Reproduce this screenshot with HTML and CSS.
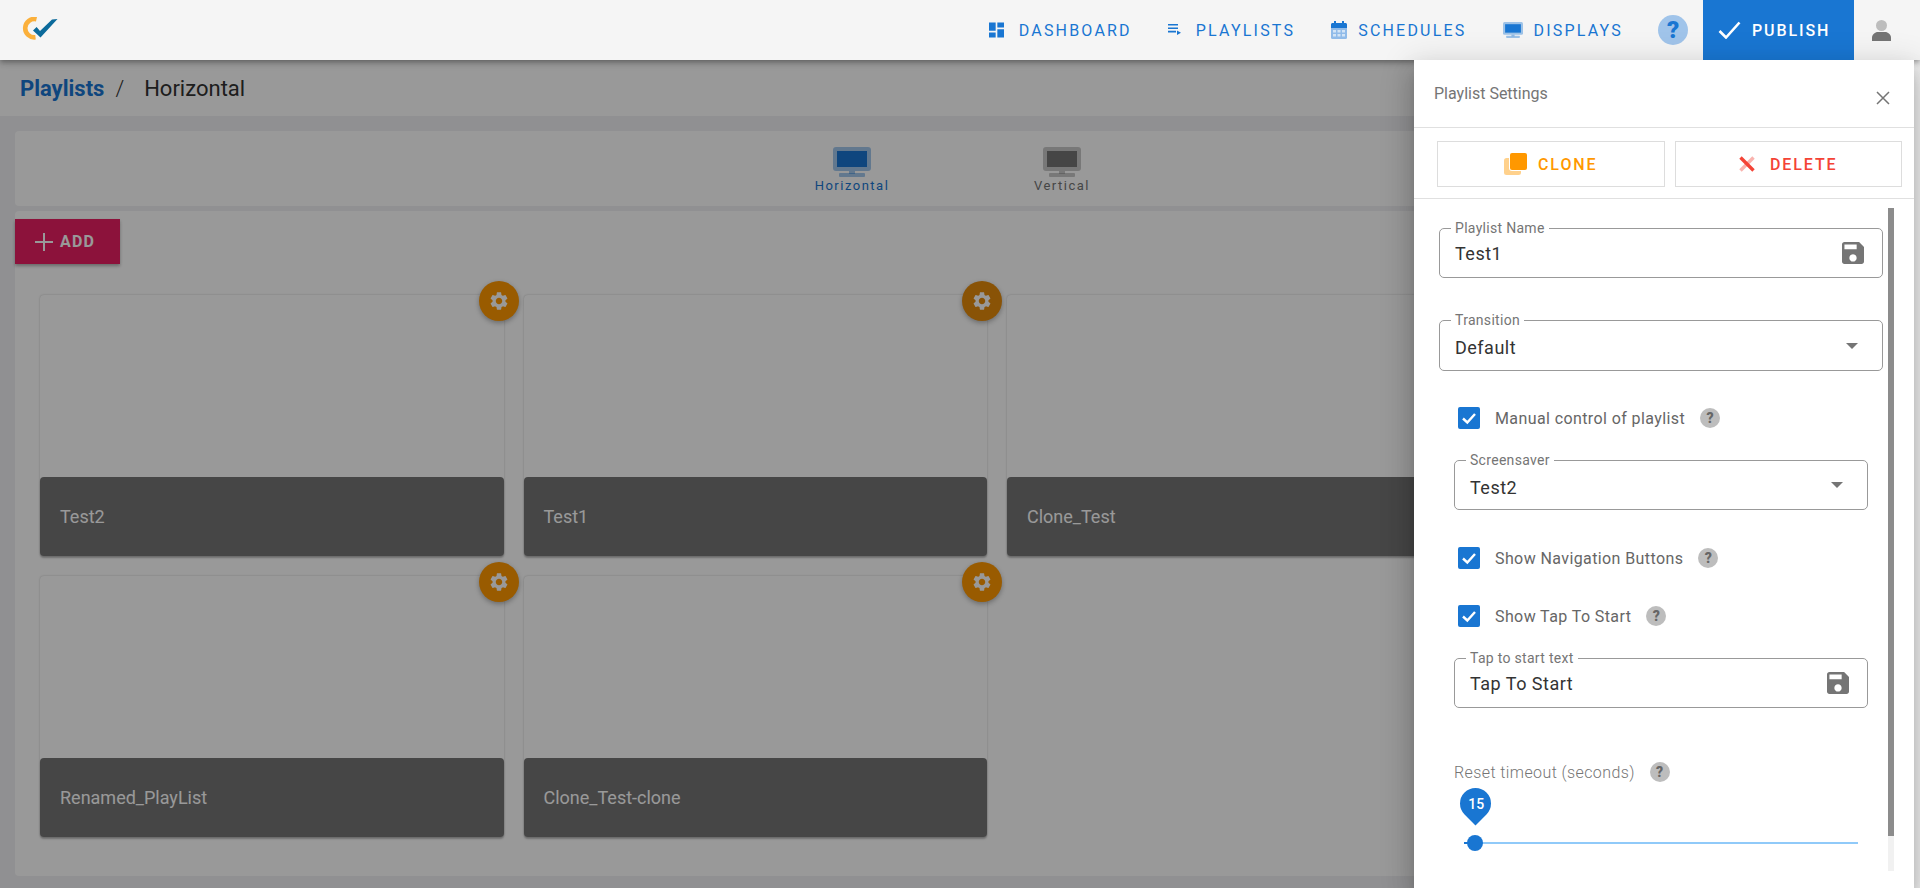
FILE: index.html
```html
<!DOCTYPE html>
<html lang="en">
<head>
    <meta charset="UTF-8">
    <meta name="viewport" content="width=device-width, initial-scale=1.0">
    <title>Playlists</title>
    <link rel="stylesheet" href="styles.css">
</head>
<body>
    <header class="topbar">
        <svg class="logo" viewBox="21 17 37 23">
            <path d="M36.5 19.2A9.2 9.2 0 1 0 35.5 37.3" fill="none" stroke="#fbb03b" stroke-width="4.6"/>
            <path d="M33 30.5L36.6 27L40 31L52 19.6L57.5 19L40.5 37.5Z" fill="#0b6a9b"/>
        </svg>
        <nav class="nav">
            <a class="nav-link gap-wide">
                <svg class="icon-dashboard" viewBox="3 3 18 18"><path d="M3 13h8V3H3v10zm0 8h8v-6H3v6zm10 0h8V11h-8v10zm0-18v6h8V3h-8z" fill="#1976d2"/></svg>
                DASHBOARD
            </a>
            <a class="nav-link gap-wide">
                <svg class="icon-playlist" viewBox="0 0 13 12"><path d="M0 0h10v1.6H0zM0 3.4h10V5H0zM0 6.8h8v1.6H0zM9 6.6l4 2.2-4 2.2z" fill="#1976d2"/></svg>
                PLAYLISTS
            </a>
            <a class="nav-link">
                <svg class="icon-calendar" viewBox="0 0 16 18">
                    <rect y="5" width="16" height="13" rx="1.5" fill="#90bbe9"/>
                    <path d="M0 7V3.5C0 2.7.7 2 1.500 2H3V0h2v2h6V0h2v2h1.500c.8 0 1.500.7 1.500 1.500V7z" fill="#1976d2"/>
                    <path d="M2 9h3v2.500H2zM6.500 9h3v2.500h-3zM11 9h3v2.500h-3zM2 13h3v2.500H2zM6.500 13h3v2.500h-3zM11 13h3v2.500h-3z" fill="#fff" opacity=".6"/>
                </svg>
                SCHEDULES
            </a>
            <a class="nav-link">
                <svg class="icon-monitor" viewBox="0 0 38 30">
                    <rect width="38" height="24" rx="3" fill="#1976d2" opacity=".4"/>
                    <rect x="16" y="24" width="6" height="3" fill="#1976d2" opacity=".4"/>
                    <rect x="6" y="26" width="26" height="4" rx="1" fill="#1976d2" opacity=".4"/>
                    <rect x="4" y="4" width="30" height="16" fill="#1976d2"/>
                </svg>
                DISPLAYS
            </a>
        </nav>
        <span class="nav-help">?</span>
        <button class="publish">
            <svg class="icon-check" viewBox="0 0 23 18"><path d="M1.500 10L8 16.500L21.500 1.500" fill="none" stroke="#fff" stroke-width="2.600"/></svg>
            PUBLISH
        </button>
        <svg class="icon-user" viewBox="0 0 19 21">
            <circle cx="9.500" cy="5.500" r="5.500" fill="#bdbdbd"/>
            <path d="M0 21v-3.500C0 14.500 3 12 6 12h7c3 0 6 2.500 6 5.500V21z" fill="#757575"/>
        </svg>
    </header>

    <main class="page">
        <div class="breadcrumb">
            <a class="crumb-link">Playlists</a>
            <span class="crumb-sep">/</span>
            <span class="crumb-current">Horizontal</span>
        </div>

        <section class="tabs">
            <div class="tab tab-active">
                <svg class="tab-icon" viewBox="0 0 38 30">
                    <rect width="38" height="24" rx="3" fill="#1976d2" opacity=".4"/>
                    <rect x="16" y="24" width="6" height="3" fill="#1976d2" opacity=".4"/>
                    <rect x="6" y="26" width="26" height="4" rx="1" fill="#1976d2" opacity=".4"/>
                    <rect x="4" y="4" width="30" height="16" fill="#1976d2"/>
                </svg>
                <span>Horizontal</span>
            </div>
            <div class="tab">
                <svg class="tab-icon" viewBox="0 0 38 30">
                    <rect width="38" height="24" rx="3" fill="#757575" opacity=".4"/>
                    <rect x="16" y="24" width="6" height="3" fill="#757575" opacity=".4"/>
                    <rect x="6" y="26" width="26" height="4" rx="1" fill="#757575" opacity=".4"/>
                    <rect x="4" y="4" width="30" height="16" fill="#757575"/>
                </svg>
                <span>Vertical</span>
            </div>
        </section>

        <section class="content">
            <button class="add-btn">
                <svg class="icon-plus" viewBox="0 0 18 18"><path d="M8 0h2v8h8v2h-8v8H8v-8H0V8h8z" fill="#fff"/></svg>
                ADD
            </button>
            <div class="card-grid">
                <div class="card">
                    <span class="gear"><svg viewBox="2 2 20 20"><use href="#gear-path"/></svg></span>
                    <div class="card-title">Test2</div>
                </div>
                <div class="card">
                    <span class="gear gear-dark"><svg viewBox="2 2 20 20"><use href="#gear-path"/></svg></span>
                    <div class="card-title">Test1</div>
                </div>
                <div class="card">
                    <span class="gear"><svg viewBox="2 2 20 20"><use href="#gear-path"/></svg></span>
                    <div class="card-title">Clone_Test</div>
                </div>
                <div class="card">
                    <span class="gear"><svg viewBox="2 2 20 20"><use href="#gear-path"/></svg></span>
                    <div class="card-title">Renamed_PlayList</div>
                </div>
                <div class="card">
                    <span class="gear"><svg viewBox="2 2 20 20"><use href="#gear-path"/></svg></span>
                    <div class="card-title">Clone_Test-clone</div>
                </div>
            </div>
        </section>
    </main>

    <div class="backdrop"></div>

    <aside class="settings">
        <div class="settings-head">
            <span>Playlist Settings</span>
            <svg class="icon-close" viewBox="0 0 14 14"><path d="M1 1l12 12M13 1L1 13" stroke="#757575" stroke-width="1.500"/></svg>
        </div>
        <div class="settings-actions">
            <button class="action action-clone">
                <svg class="icon-clone" viewBox="0 0 23 22">
                    <rect y="5" width="17" height="17" rx="2.500" fill="#ff9800" opacity=".45"/>
                    <rect x="5" y="-1" width="19" height="19" rx="3" fill="#fff"/>
                    <rect x="6" width="17" height="17" rx="2" fill="#ff9800"/>
                </svg>
                CLONE
            </button>
            <button class="action action-delete">
                <svg class="icon-x" viewBox="0 0 16 16">
                    <path d="M14.500 1.500L1.500 14.500" stroke="#f44336" stroke-width="3.400" opacity=".4"/>
                    <path d="M1.500 1.500L14.500 14.500" stroke="#f44336" stroke-width="3.400"/>
                </svg>
                DELETE
            </button>
        </div>
        <div class="settings-body">
            <div class="settings-form">
                <div class="field field-name">
                    <label class="field-label">Playlist Name</label>
                    <span class="field-value">Test1</span>
                    <svg class="icon-save" viewBox="3 3 18 18"><path d="M17 3H5c-1.110 0-2 .9-2 2v14c0 1.100.89 2 2 2h14c1.100 0 2-.9 2-2V7l-4-4zm-5 16c-1.660 0-3-1.340-3-3s1.340-3 3-3 3 1.340 3 3-1.340 3-3 3zm3-10H5V5h10v4z" fill="#757575"/></svg>
                </div>
                <div class="field field-select field-transition">
                    <label class="field-label">Transition</label>
                    <span class="field-value">Default</span>
                    <span class="caret"></span>
                </div>
                <div class="nested">
                    <div class="check-row row-manual">
                        <span class="checkbox"><svg viewBox="0 0 22 22"><path d="M5 11.500L9.300 15.500L17 7" fill="none" stroke="#fff" stroke-width="2.400"/></svg></span>
                        <span class="check-label">Manual control of playlist</span>
                        <span class="help">?</span>
                    </div>
                    <div class="field field-select field-screensaver">
                        <label class="field-label">Screensaver</label>
                        <span class="field-value">Test2</span>
                        <span class="caret"></span>
                    </div>
                    <div class="check-row row-nav">
                        <span class="checkbox"><svg viewBox="0 0 22 22"><path d="M5 11.500L9.300 15.500L17 7" fill="none" stroke="#fff" stroke-width="2.400"/></svg></span>
                        <span class="check-label">Show Navigation Buttons</span>
                        <span class="help">?</span>
                    </div>
                    <div class="check-row row-tap">
                        <span class="checkbox"><svg viewBox="0 0 22 22"><path d="M5 11.500L9.300 15.500L17 7" fill="none" stroke="#fff" stroke-width="2.400"/></svg></span>
                        <span class="check-label">Show Tap To Start</span>
                        <span class="help">?</span>
                    </div>
                    <div class="field field-tap">
                        <label class="field-label">Tap to start text</label>
                        <span class="field-value">Tap To Start</span>
                        <svg class="icon-save" viewBox="3 3 18 18"><path d="M17 3H5c-1.110 0-2 .9-2 2v14c0 1.100.89 2 2 2h14c1.100 0 2-.9 2-2V7l-4-4zm-5 16c-1.660 0-3-1.340-3-3s1.340-3 3-3 3 1.340 3 3-1.340 3-3 3zm3-10H5V5h10v4z" fill="#757575"/></svg>
                    </div>
                    <div class="slider-head">
                        <span>Reset timeout (seconds)</span>
                        <span class="help">?</span>
                    </div>
                    <div class="slider">
                        <span class="slider-pin"><b>15</b></span>
                        <span class="slider-thumb"></span>
                    </div>
                </div>
            </div>
            <div class="scrollbar"><div class="scrollbar-thumb"></div></div>
        </div>
    </aside>

    <svg class="defs" width="0" height="0">
        <path id="gear-path" fill="#fff" d="M19.140 12.940c.04-.3.06-.61.06-.94 0-.32-.02-.64-.07-.94l2.030-1.580c.18-.14.23-.41.12-.61l-1.920-3.320c-.12-.22-.37-.29-.59-.22l-2.390.96c-.5-.38-1.030-.7-1.620-.94l-.36-2.540c-.04-.24-.24-.41-.48-.41h-3.840c-.24 0-.43.17-.47.41l-.36 2.540c-.59.24-1.130.57-1.620.94l-2.390-.96c-.22-.08-.47 0-.59.22L2.740 8.870c-.12.21-.08.47.12.61l2.030 1.580c-.05.3-.09.63-.09.94s.02.64.07.94l-2.030 1.580c-.18.14-.23.41-.12.61l1.920 3.320c.12.22.37.29.59.22l2.390-.96c.5.38 1.030.7 1.620.94l.36 2.540c.05.24.24.41.48.41h3.840c.24 0 .44-.17.47-.41l.36-2.540c.59-.24 1.130-.56 1.620-.94l2.390.96c.22.08.47 0 .59-.22l1.920-3.320c.12-.22.07-.47-.12-.61l-2.010-1.580zM12 15.600c-1.980 0-3.600-1.620-3.600-3.600s1.620-3.600 3.600-3.600 3.600 1.620 3.600 3.600-1.620 3.600-3.600 3.600z"/>
    </svg>
</body>
</html>
```

FILE: styles.css
```css
*{
    box-sizing: border-box;
}
html, body{
    margin: 0;
    height: 100%;
    overflow: hidden;
}
body{
    background-color: #f1f1f1;
    font-family: Roboto, "Liberation Sans", sans-serif;
    color: #333;
}
.defs{
    position: absolute;
}

/* top bar */
.topbar{
    position: relative;
    z-index: 3;
    height: 60px;
    display: flex;
    align-items: center;
    background-color: #f5f5f5;
    box-shadow: 0 2px 4px -1px rgba(0,0,0,.2), 0 4px 5px rgba(0,0,0,.14), 0 1px 10px rgba(0,0,0,.12);
}
.logo{
    width: 37px;
    height: 23px;
    margin: -3px 0 0 21px;
}
.nav{
    margin-left: auto;
    display: flex;
    gap: 36px;
}
.nav-link{
    display: flex;
    align-items: center;
    gap: 11px;
    color: #1976d2;
    font-size: 16px;
    letter-spacing: 2.2px;
}
.gap-wide{
    gap: 15px;
}
.icon-dashboard{
    width: 15px;
    height: 16px;
}
.icon-playlist{
    width: 13px;
    height: 12px;
}
.icon-calendar{
    width: 16px;
    height: 18px;
}
.icon-monitor{
    width: 20px;
    height: 16px;
}
.nav-help{
    width: 30px;
    height: 30px;
    margin-left: 35px;
    border-radius: 50%;
    background-color: #a0c4ea;
    color: #1976d2;
    font-size: 24px;
    font-weight: 900;
    line-height: 30px;
    text-align: center;
}
.publish{
    width: 151px;
    height: 60px;
    margin-left: 15px;
    padding: 0 0 0 15px;
    display: flex;
    align-items: center;
    gap: 11px;
    border: none;
    background-color: #1976d2;
    color: white;
    font-family: inherit;
    font-size: 16px;
    font-weight: 500;
    letter-spacing: 1.900px;
}
.icon-check{
    width: 23px;
    height: 18px;
}
.icon-user{
    width: 19px;
    height: 21px;
    margin: 0 29px 0 18px;
}

/* page behind the drawer */
.page{
    height: 828px;
    margin-right: 6px;
    background-color: #f0f0f3;
    overflow: hidden;
}
.breadcrumb{
    height: 56px;
    padding-left: 20px;
    display: flex;
    align-items: center;
    background-color: white;
    font-size: 22px;
}
.crumb-link{
    color: #1976d2;
    font-weight: 700;
}
.crumb-sep{
    margin: 0 20px 0 11px;
    font-weight: 300;
}
.crumb-current{
    font-weight: 400;
}
.tabs{
    height: 75px;
    margin: 15px 15px 0;
    display: flex;
    justify-content: center;
    gap: 120px;
    border-radius: 4px;
    background-color: white;
}
.tab{
    width: 90px;
    padding-top: 16px;
    display: flex;
    flex-direction: column;
    align-items: center;
    color: #757575;
    font-size: 13px;
    line-height: 17px;
    letter-spacing: 1.500px;
}
.tab-active{
    color: #1976d2;
}
.tab-icon{
    width: 38px;
    height: 30px;
}
.content{
    height: 665px;
    margin: 5px 15px 0;
    padding-top: 8px;
    border-radius: 4px;
    background-color: white;
}
.add-btn{
    width: 105px;
    height: 45px;
    padding: 0 0 0 20px;
    display: flex;
    align-items: center;
    gap: 7px;
    border: none;
    background-color: #e91e63;
    box-shadow: 0 2px 3px rgba(0,0,0,.3);
    color: white;
    font-family: inherit;
    font-size: 16px;
    font-weight: 700;
    letter-spacing: 1.200px;
}
.icon-plus{
    width: 18px;
    height: 18px;
}
.card-grid{
    margin: 31px 0 0 25px;
    display: grid;
    grid-template-columns: repeat(3, 463.500px);
    grid-auto-rows: 261px;
    gap: 20px;
}
.card{
    position: relative;
    display: flex;
    flex-direction: column;
    justify-content: flex-end;
    border-radius: 4px;
    box-shadow: 0 0 2px rgba(0,0,0,.25);
}
.card-title{
    height: 79px;
    padding-left: 20px;
    display: flex;
    align-items: center;
    border-radius: 4px;
    background-color: #757575;
    box-shadow: 0 2px 2px rgba(0,0,0,.25);
    color: white;
    font-size: 18px;
}
.gear{
    position: absolute;
    top: -14px;
    right: -15px;
    width: 40px;
    height: 40px;
    display: flex;
    align-items: center;
    justify-content: center;
    border-radius: 50%;
    background-color: #ff9800;
    box-shadow: 0 2px 5px rgba(0,0,0,.3);
}
.gear svg{
    width: 18px;
    height: 18px;
}
.gear-dark{
    background-color: #e58a0b;
}

/* dim layer and drawer */
.backdrop{
    position: absolute;
    z-index: 2;
    top: 60px;
    left: 0;
    right: 6px;
    bottom: 0;
    background-color: rgba(0,0,0,.4);
}
.settings{
    position: absolute;
    z-index: 4;
    top: 60px;
    right: 6px;
    bottom: 0;
    width: 500px;
    display: flex;
    flex-direction: column;
    background-color: white;
    box-shadow: 0 8px 10px -5px rgba(0,0,0,.2), 0 16px 24px 2px rgba(0,0,0,.14), 0 6px 30px 5px rgba(0,0,0,.12);
}
.settings-head{
    height: 68px;
    padding: 0 24px 0 20px;
    display: flex;
    align-items: center;
    justify-content: space-between;
    border-bottom: 1px solid #e0e0e0;
    color: #757575;
    font-size: 16px;
}
.icon-close{
    width: 14px;
    height: 14px;
    margin-top: 9px;
}
.settings-actions{
    height: 71px;
    padding: 13px 12px 0 23px;
    display: flex;
    gap: 10px;
    border-bottom: 1px solid #e0e0e0;
}
.action{
    flex: 1;
    height: 46px;
    display: flex;
    align-items: center;
    justify-content: center;
    gap: 11px;
    border: 1px solid #ddd;
    background-color: white;
    font-family: inherit;
    font-size: 16px;
    font-weight: 500;
    letter-spacing: 1.900px;
}
.action-clone{
    color: #ff9800;
}
.action-delete{
    color: #f44336;
    gap: 15px;
}
.icon-clone{
    width: 23px;
    height: 22px;
    overflow: visible;
}
.icon-x{
    width: 16px;
    height: 16px;
}
.settings-body{
    flex: 1;
    min-height: 0;
    display: flex;
}
.settings-form{
    width: 474px;
    padding: 29px 5px 0 25px;
}
.scrollbar{
    width: 6px;
    height: 663px;
    margin-top: 9px;
    background-color: #f1f1f1;
}
.scrollbar-thumb{
    height: 628px;
    background-color: #8c8c8c;
}

/* form */
.field{
    position: relative;
    height: 50px;
    display: flex;
    align-items: center;
    justify-content: space-between;
    padding: 0 18px 0 15px;
    border: 1px solid #999;
    border-radius: 5px;
}
.field-label{
    position: absolute;
    top: -9px;
    left: 11px;
    padding: 0 4px;
    background-color: white;
    color: #757575;
    font-size: 14px;
    line-height: 16px;
    letter-spacing: .3px;
}
.field-value{
    color: #333;
    font-size: 18px;
    letter-spacing: .5px;
}
.field-select .field-value{
    padding-top: 4px;
}
.field-transition{
    margin-top: 42px;
    height: 51px;
}
.field-tap{
    margin-top: 31px;
}
.field-screensaver{
    margin-top: 31px;
}
.icon-save{
    width: 22px;
    height: 22px;
}
.caret{
    width: 0;
    height: 0;
    margin-right: 6px;
    border-left: 6px solid transparent;
    border-right: 6px solid transparent;
    border-top: 6px solid #757575;
}
.nested{
    padding: 0 15px;
}
.check-row{
    height: 22px;
    padding-left: 4px;
    display: flex;
    align-items: center;
}
.row-manual{
    margin-top: 36px;
}
.row-nav{
    margin-top: 37px;
}
.row-tap{
    margin-top: 36px;
}
.checkbox{
    width: 22px;
    height: 22px;
    margin-right: 15px;
    border-radius: 2px;
    background-color: #1976d2;
}
.checkbox svg{
    display: block;
}
.check-label{
    color: #666;
    font-size: 16px;
    letter-spacing: .4px;
}
.help{
    width: 20px;
    height: 20px;
    margin-left: 15px;
    border-radius: 50%;
    background-color: #bdbdbd;
    color: #666;
    font-size: 14px;
    font-weight: 900;
    line-height: 20px;
    text-align: center;
}
.slider-head{
    margin-top: 53px;
    height: 22px;
    display: flex;
    align-items: center;
    color: #757575;
    font-size: 16px;
    font-weight: 300;
    letter-spacing: .4px;
}
.slider{
    position: relative;
    height: 2px;
    margin: 59px 10px 0;
    background-color: #90caf9;
}
.slider-pin{
    position: absolute;
    left: -4px;
    top: -54px;
    width: 31px;
    height: 31px;
    display: flex;
    align-items: center;
    justify-content: center;
    border-radius: 50% 50% 50% 0;
    background-color: #1976d2;
    transform: rotate(-45deg);
}
.slider-pin b{
    color: white;
    font-size: 14px;
    font-weight: 500;
    transform: rotate(45deg);
}
.slider-thumb{
    position: absolute;
    left: 3px;
    top: -7px;
    width: 16px;
    height: 16px;
    border-radius: 50%;
    background-color: #1976d2;
}
.slider-thumb::before{
    content: "";
    position: absolute;
    left: -3px;
    top: 7px;
    width: 8px;
    height: 2px;
    background-color: #1976d2;
}
```
